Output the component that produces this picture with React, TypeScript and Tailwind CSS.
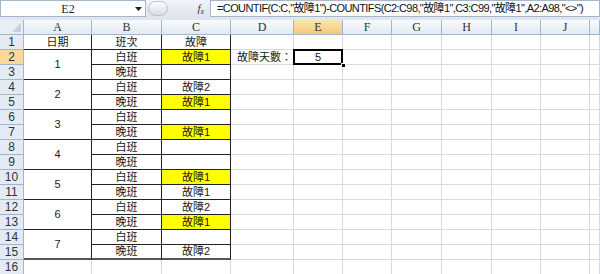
import React from "react";

const CJK = '"Liberation Sans", "Noto Sans CJK TC", sans-serif';

type Row = { a?: string; b: string; c: string; y?: boolean };

const ROWS: Row[] = [
  { a: "日期", b: "班次", c: "故障" },
  { a: "1", b: "白班", c: "故障1", y: true },
  { b: "晚班", c: "" },
  { a: "2", b: "白班", c: "故障2" },
  { b: "晚班", c: "故障1", y: true },
  { a: "3", b: "白班", c: "" },
  { b: "晚班", c: "故障1", y: true },
  { a: "4", b: "白班", c: "" },
  { b: "晚班", c: "" },
  { a: "5", b: "白班", c: "故障1", y: true },
  { b: "晚班", c: "故障1" },
  { a: "6", b: "白班", c: "故障2" },
  { b: "晚班", c: "故障1", y: true },
  { a: "7", b: "白班", c: "" },
  { b: "晚班", c: "故障2" },
];

const COLS = ["A", "B", "C", "D", "E", "F", "G", "H", "I", "J", ""];

function FormulaBar() {
  return (
    <div className="flex h-[20px] bg-[#dfe6ef] pb-[3px]">
      <div className="flex w-[146px] items-center border border-[#a7b5c8] bg-white">
        <span className="flex-1 text-center text-[12px] text-[#222]" style={{ fontFamily: '"Liberation Serif", serif' }}>
          E2
        </span>
        <svg width="7" height="4" viewBox="0 0 7 4" className="mr-[3px]">
          <path d="M0 0h7L3.5 4z" fill="#222" />
        </svg>
      </div>
      <div className="flex w-[64px] items-center bg-gradient-to-b from-[#f1f4f9] to-[#dde4ee]">
        <div className="ml-[2px] h-[15px] w-[20px] rounded-full border border-[#b9c3d0] bg-gradient-to-b from-white to-[#d4dbe5]" />
        <span className="ml-auto mr-[6px] text-[11px] italic text-[#333]" style={{ fontFamily: '"Liberation Serif", serif' }}>
          f<sub className="text-[8px]">x</sub>
        </span>
      </div>
      <div
        className="flex flex-1 items-center overflow-hidden whitespace-nowrap border border-[#a7b5c8] bg-white pl-[6px] text-[11px] tracking-[-0.6px] text-[#111]"
        style={{ fontFamily: CJK }}
      >
        =COUNTIF(C:C,"故障1")-COUNTIFS(C2:C98,"故障1",C3:C99,"故障1",A2:A98,"&lt;&gt;")
      </div>
    </div>
  );
}

function Sheet() {
  const cells: React.ReactNode[] = [];

  // header row
  cells.push(
    <div key="corner" className="relative border-r border-b border-[#9eb6ce] bg-[#e9eef5]">
      <svg width="9" height="9" viewBox="0 0 9 9" className="absolute right-[2px] bottom-[2px]">
        <path d="M9 0v9H0z" fill="#c6d0dc" />
      </svg>
    </div>
  );
  COLS.forEach((c, i) => {
    const sel = c === "E";
    cells.push(
      <div
        key={"h" + i}
        className={
          "flex items-center justify-center border-r border-b border-[#9eb6ce] text-[12px] " +
          (sel ? "bg-gradient-to-b from-[#fbe3b2] to-[#f5c874] text-[#333]" : "bg-gradient-to-b from-[#f8fafd] to-[#e3eaf3] text-[#333]")
        }
        style={{ fontFamily: '"Liberation Serif", serif' }}
      >
        {c}
      </div>
    );
  });

  const rowHead = (n: number) => (
    <div
      key={"r" + n}
      className={
        "flex items-center justify-center border-r border-b border-[#9eb6ce] text-[12px] " +
        (n === 2 ? "bg-[#f8d89b] text-[#333]" : "bg-[#e4ebf5] text-[#333]")
      }
      style={{ fontFamily: '"Liberation Sans", sans-serif' }}
    >
      {n}
    </div>
  );

  const grid = "border-r border-b border-[#d5dbe5]";

  ROWS.forEach((r, i) => {
    const n = i + 1;
    const last = n === 15;
    const bb = last ? "border-b-2 border-b-[#555]" : "border-b border-b-[#222]";
    cells.push(rowHead(n));
    if (r.a !== undefined) {
      cells.push(
        <div
          key={"a" + n}
          className={
            "flex items-center justify-center border-r border-r-[#222] text-[11px] text-[#1a1a1a] " +
            (n === 1 ? "" : "row-span-2 ") +
            (n === 14 ? "border-b-2 border-b-[#555]" : "border-b border-b-[#222]")
          }
        >
          {r.a}
        </div>
      );
    }
    cells.push(
      <div key={"b" + n} className={"flex items-center justify-center border-r border-r-[#222] text-[11px] text-[#1a1a1a] " + bb}>
        {r.b}
      </div>
    );
    cells.push(
      <div
        key={"c" + n}
        className={
          "flex items-center justify-center border-r border-r-[#222] text-[11px] text-[#1a1a1a] " +
          bb +
          (r.y ? " bg-[#ffff00]" : " bg-white")
        }
      >
        {r.c}
      </div>
    );
    // D
    cells.push(
      <div key={"d" + n} className={"flex items-center pl-[6px] text-[11px] text-[#1a1a1a] " + grid}>
        {n === 2 ? "故障天數：" : ""}
      </div>
    );
    // E
    if (n === 2) {
      cells.push(
        <div key="e2" className={"relative flex items-center justify-center text-[11px] text-[#1a1a1a] " + grid}>
          5
          <div className="absolute top-[-1px] left-[-1px] right-[-1px] bottom-[-1px] border-2 border-black" />
          <div className="absolute right-[-4px] bottom-[-4px] h-[5px] w-[5px] border border-white bg-black" />
        </div>
      );
    } else {
      cells.push(<div key={"e" + n} className={grid} />);
    }
    for (let k = 0; k < 6; k++) cells.push(<div key={"x" + n + "-" + k} className={grid} />);
  });

  // row 16
  cells.push(rowHead(16));
  for (let k = 0; k < 11; k++) cells.push(<div key={"z" + k} className={grid} />);

  return (
    <div
      className="grid grid-cols-[24px_68px_70px_69px_63px_49px_49px_50px_50px_49px_49px_10px] auto-rows-[15px] bg-white"
      style={{ fontFamily: CJK }}
    >
      {cells}
    </div>
  );
}

export default function App() {
  return (
    <div className="h-[274px] w-[600px] overflow-hidden bg-white">
      <FormulaBar />
      <Sheet />
    </div>
  );
}
